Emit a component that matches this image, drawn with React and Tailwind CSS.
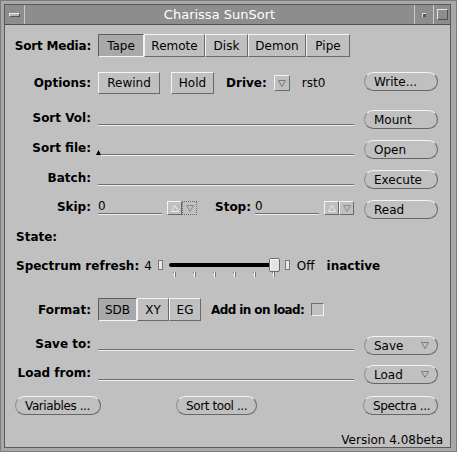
import React from "react";

const raised =
  "border border-t-[#f4f4f4] border-l-[#f4f4f4] border-b-[#6a6a6a] border-r-[#6a6a6a]";
const sunken =
  "border border-t-[#5e5e5e] border-l-[#5e5e5e] border-b-[#f4f4f4] border-r-[#f4f4f4] bg-[#a9a9a9]";

function Tog({ label, w, on }) {
  return (
    <div className={`${w} h-full shrink-0 flex items-center justify-center ${on ? sunken : raised}`}>
      {label}
    </div>
  );
}

function Label({ children, className = "" }) {
  return <div className={`w-[86px] shrink-0 text-right font-bold whitespace-nowrap ${className}`}>{children}</div>;
}

function DownTri({ stroke = "#7a7a7a" }) {
  return (
    <svg width="8" height="7" viewBox="0 0 8 7" className="block">
      <path d="M0.5 0.5 H7.5 L4 6.5 Z" fill="none" stroke={stroke} />
    </svg>
  );
}

function UpTri({ stroke = "#7a7a7a" }) {
  return (
    <svg width="8" height="7" viewBox="0 0 8 7" className="block">
      <path d="M0.5 6.5 H7.5 L4 0.5 Z" fill="none" stroke={stroke} />
    </svg>
  );
}

function RBtn({ label, w = "w-[74px]", menu, className = "" }) {
  return (
    <div
      className={`${w} h-[19px] shrink-0 rounded-full border border-t-[#f4f4f4] border-l-[#8e8e8e] border-b-[#666666] border-r-[#666666] flex items-center pl-[9px] pr-[8px] leading-[14px] whitespace-nowrap overflow-hidden ${className}`}
    >
      <span>{label}</span>
      {menu && (
        <span className="ml-auto">
          <DownTri />
        </span>
      )}
    </div>
  );
}

function Line({ pb = "pb-[2px]" }) {
  return (
    <div className={`flex-1 self-stretch flex flex-col justify-end ${pb}`}>
      <div className="border-t border-t-[#6e6e6e] border-b border-b-[#f0f0f0]" />
    </div>
  );
}

function Spin({ dottedDown }) {
  return (
    <div className="flex self-start mt-[1px] shrink-0">
      <div className={`w-[15px] h-[14px] flex items-center justify-center ${raised}`}>
        <UpTri stroke="#e8e8e8" />
      </div>
      <div
        className={`w-[15px] h-[14px] flex items-center justify-center ${
          dottedDown ? "border border-dotted border-[#6a6a6a]" : raised
        }`}
      >
        <DownTri stroke="#8a8a8a" />
      </div>
    </div>
  );
}

function NumField() {
  return (
    <div className="w-[64px] self-start h-[15px] flex flex-col shrink-0">
      <div className="h-[13px] leading-[13px]">0</div>
      <div className="border-t border-t-[#6e6e6e] border-b border-b-[#f0f0f0]" />
    </div>
  );
}

function Slider() {
  const ticks = [16, 36, 56, 76, 96, 115];
  return (
    <svg width="132" height="20" viewBox="0 0 132 20" className="shrink-0 block mt-[2px]">
      <rect x="0.5" y="2.5" width="4" height="9" fill="#e8e8e8" stroke="#777" />
      <rect x="11" y="5" width="102" height="4" rx="2" fill="#000" />
      <rect x="111.5" y="0.5" width="10" height="13" rx="1.5" fill="#e4e4e4" stroke="#6a6a6a" />
      <path d="M112.5 12.5 V1.5 H120.5" fill="none" stroke="#ffffff" />
      <rect x="127.5" y="2.5" width="4" height="9" fill="#e8e8e8" stroke="#777" />
      {ticks.map((x) => (
        <g key={x}>
          <rect x={x} y="14" width="1" height="5" fill="#ffffff" />
          <rect x={x + 1} y="14" width="1" height="5" fill="#777" />
          <rect x={x - 1} y="14" width="1" height="1" fill="#777" />
        </g>
      ))}
    </svg>
  );
}

export default function App() {
  return (
    <div className="w-[457px] h-[452px] bg-[#a8a8a8] border border-[#7c7c7c] pt-[3px] pl-[3px] pr-[5px] pb-[3px] flex flex-col font-['DejaVu_Sans',sans-serif]">
      <div className="flex-1 flex flex-col border border-[#5a5a5a]">
        {/* Title bar */}
        <div className="h-[20px] shrink-0 flex bg-[#8d8d8d] border-b border-b-[#4e4e4e]">
          <div className="w-[20px] shrink-0 border-r border-r-[#c8c8c8] flex items-center justify-center">
            <div className="w-[11px] h-[4px] bg-[#b4b4b4] border border-t-[#ececec] border-l-[#ececec] border-b-[#555555] border-r-[#555555]" />
          </div>
          <div className="flex-1 text-center text-white text-[13px] leading-[19px]">Charissa SunSort</div>
          <div className="w-[19px] shrink-0 border-l border-l-[#c8c8c8] flex items-center justify-center">
            <div className="w-[4px] h-[4px] bg-[#555555] border-t border-l border-[#e0e0e0]" />
          </div>
          <div className="w-[17px] shrink-0 border-l border-l-[#c8c8c8] flex items-center justify-center">
            <div className="w-[11px] h-[11px] border border-t-[#e6e6e6] border-l-[#e6e6e6] border-b-[#4e4e4e] border-r-[#4e4e4e]" />
          </div>
        </div>

        {/* Content */}
        <div className="flex-1 bg-[#c0c0c0] flex flex-col pr-[12px] text-[12px] leading-[14px] text-black">
          {/* Sort Media */}
          <div className="mt-[9px] h-[23px] flex items-center">
            <Label className="tracking-[-0.2px]">Sort Media:</Label>
            <div className="ml-[7px] flex h-full">
              <Tog label="Tape" w="w-[46px]" on />
              <Tog label="Remote" w="w-[61px]" />
              <Tog label="Disk" w="w-[43px]" />
              <Tog label="Demon" w="w-[58px]" />
              <Tog label="Pipe" w="w-[44px]" />
            </div>
          </div>

          {/* Options */}
          <div className="mt-[15px] h-[22px] flex items-center">
            <Label>Options:</Label>
            <div className="ml-[7px] flex h-full">
              <Tog label="Rewind" w="w-[62px]" />
            </div>
            <div className="ml-[11px] flex h-full">
              <Tog label="Hold" w="w-[43px]" />
            </div>
            <div className="ml-[12px] font-bold">Drive:</div>
            <div className={`ml-[7px] w-[16px] h-[16px] flex items-center justify-center ${raised}`}>
              <DownTri />
            </div>
            <div className="ml-[12px]">rst0</div>
            <RBtn label="Write..." className="ml-auto self-start" />
          </div>

          {/* Sort Vol */}
          <div className="mt-[16px] h-[18px] flex items-start">
            <Label className="mt-[1px]">Sort Vol:</Label>
            <div className="ml-[7px] flex-1 self-stretch flex">
              <Line />
            </div>
            <RBtn label="Mount" className="ml-[10px] h-[18px]" />
          </div>

          {/* Sort file */}
          <div className="mt-[12px] h-[18px] flex items-start">
            <Label className="mt-[1px]">Sort file:</Label>
            <svg width="5" height="5" viewBox="0 0 5 5" className="ml-[5px] self-end mb-[3px] shrink-0 block">
              <path d="M0 5 L2.5 0 L5 5 Z" fill="#000" />
            </svg>
            <div className="flex-1 self-stretch flex">
              <Line />
            </div>
            <RBtn label="Open" className="ml-[10px] h-[18px]" />
          </div>

          {/* Batch */}
          <div className="mt-[12px] h-[18px] flex items-start">
            <Label className="mt-[1px]">Batch:</Label>
            <div className="ml-[7px] flex-1 self-stretch flex">
              <Line />
            </div>
            <RBtn label="Execute" className="ml-[10px] h-[18px]" />
          </div>

          {/* Skip / Stop */}
          <div className="mt-[12px] h-[18px] flex items-start">
            <Label>Skip:</Label>
            <div className="ml-[7px]">
              <NumField />
            </div>
            <div className="ml-[5px]">
              <Spin dottedDown />
            </div>
            <div className="ml-[18px] font-bold">Stop:</div>
            <div className="ml-[4px]">
              <NumField />
            </div>
            <div className="ml-[5px]">
              <Spin />
            </div>
            <RBtn label="Read" className="ml-auto h-[18px]" />
          </div>

          {/* State */}
          <div className="mt-[12px] h-[14px] pl-[11px] flex">
            <div className="font-bold">State:</div>
          </div>

          {/* Spectrum refresh */}
          <div className="mt-[12px] h-[22px] pl-[11px] flex items-start">
            <div className="font-bold mt-[3px]">Spectrum refresh:</div>
            <div className="ml-[5px] mt-[3px]">4</div>
            <div className="ml-[6px]">
              <Slider />
            </div>
            <div className="ml-[7px] mt-[3px]">Off</div>
            <div className="ml-[12px] mt-[3px] font-bold">inactive</div>
          </div>

          {/* Format */}
          <div className="mt-[20px] h-[23px] flex items-center">
            <Label>Format:</Label>
            <div className="ml-[7px] flex h-full">
              <Tog label="SDB" w="w-[39px]" on />
              <Tog label="XY" w="w-[32px]" />
              <Tog label="EG" w="w-[32px]" />
            </div>
            <div className="ml-[10px] font-bold tracking-[-0.6px]">Add in on load:</div>
            <div className="ml-[7px] w-[13px] h-[13px] border border-t-[#6e6e6e] border-l-[#6e6e6e] border-b-[#f2f2f2] border-r-[#f2f2f2]" />
          </div>

          {/* Save to */}
          <div className="mt-[15px] h-[19px] flex items-start">
            <Label className="mt-[1px]">Save to:</Label>
            <div className="ml-[7px] flex-1 self-stretch flex">
              <Line pb="pb-[4px]" />
            </div>
            <RBtn label="Save" menu className="ml-[10px]" />
          </div>

          {/* Load from */}
          <div className="mt-[10px] h-[19px] flex items-start">
            <Label className="mt-[1px]">Load from:</Label>
            <div className="ml-[7px] flex-1 self-stretch flex">
              <Line pb="pb-[3px]" />
            </div>
            <RBtn label="Load" menu className="ml-[10px]" />
          </div>

          {/* Bottom buttons */}
          <div className="mt-[12px] h-[19px] flex">
            <RBtn label="Variables ..." w="w-[86px]" className="ml-[10px] tracking-[-0.4px]" />
            <RBtn label="Sort tool ..." w="w-[81px]" className="ml-[75px] tracking-[-0.4px]" />
            <RBtn label="Spectra ..." w="w-[75px]" className="ml-auto tracking-[-0.4px]" />
          </div>

          {/* Version */}
          <div className="mt-[18px] flex justify-end -mr-[5px]">
            <div>Version 4.08beta</div>
          </div>
        </div>
      </div>
    </div>
  );
}
